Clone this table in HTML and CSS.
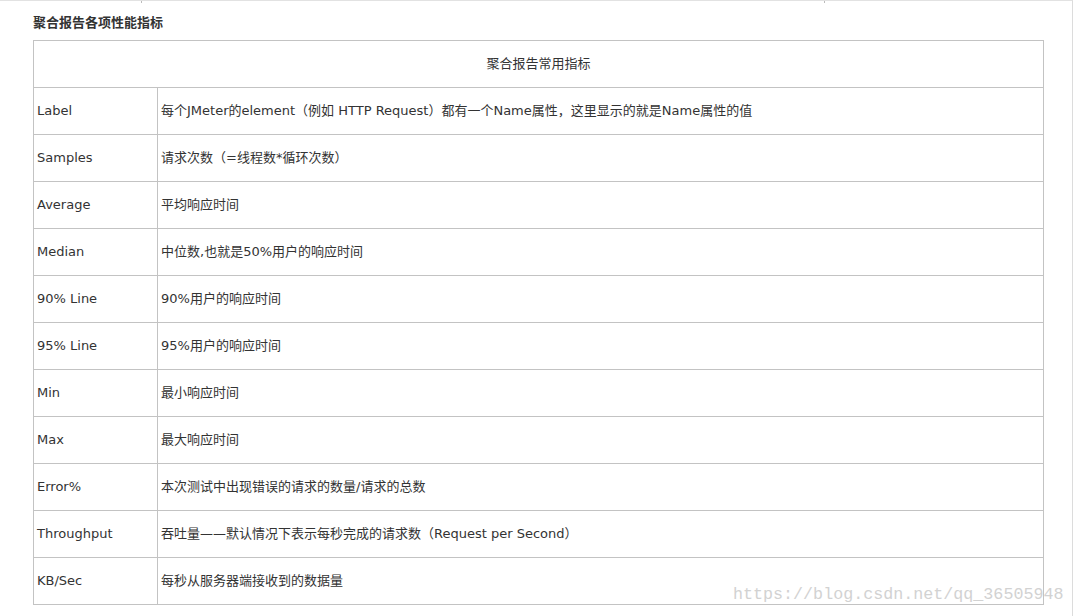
FILE: index.html
```html
<!DOCTYPE html>
<html lang="zh">
<head>
<meta charset="utf-8">
<title>聚合报告各项性能指标</title>
<link rel="stylesheet" href="styles.css">
</head>
<body>
<div class="page">
  <span class="tick tick-a"></span>
  <span class="tick tick-b"></span>
  <div class="content">
    <h3 class="title">聚合报告各项性能指标</h3>
    <table class="metrics">
      <colgroup><col class="c1"><col class="c2"></colgroup>
      <tr><td colspan="2" class="head">聚合报告常用指标</td></tr>
      <tr><td>Label</td><td>每个JMeter的element（例如 HTTP Request）都有一个Name属性，这里显示的就是Name属性的值</td></tr>
      <tr><td>Samples</td><td>请求次数（=线程数*循环次数）</td></tr>
      <tr><td>Average</td><td>平均响应时间</td></tr>
      <tr><td>Median</td><td>中位数,也就是50%用户的响应时间</td></tr>
      <tr><td>90% Line</td><td>90%用户的响应时间</td></tr>
      <tr><td>95% Line</td><td>95%用户的响应时间</td></tr>
      <tr><td>Min</td><td>最小响应时间</td></tr>
      <tr><td>Max</td><td>最大响应时间</td></tr>
      <tr><td>Error%</td><td>本次测试中出现错误的请求的数量/请求的总数</td></tr>
      <tr><td>Throughput</td><td>吞吐量——默认情况下表示每秒完成的请求数（Request per Second）</td></tr>
      <tr><td>KB/Sec</td><td>每秒从服务器端接收到的数据量</td></tr>
    </table>
  </div>
  <div class="watermark">https://blog.csdn.net/qq_36505948</div>
</div>
</body>
</html>
```
FILE: styles.css
```css
html, body {
  margin: 0;
  padding: 0;
  background: #fff;
}
.page {
  position: relative;
  width: 1073px;
  height: 616px;
  border-top: 1px solid #e2e2e2;
  border-right: 1px solid #dcdcdc;
  box-sizing: border-box;
  overflow: hidden;
  font-family: "DejaVu Sans", "Noto Sans CJK SC", sans-serif;
  color: #333;
}
.tick {
  position: absolute;
  top: 0;
  width: 1px;
  height: 2px;
  background: #bbb;
}
.tick-a { left: 141px; }
.tick-b { left: 824px; }
.content {
  padding: 12px 0 0 33px;
}
.title {
  margin: 0 0 9px 0;
  font-family: "Noto Sans CJK SC", sans-serif;
  font-size: 13px;
  font-weight: bold;
  line-height: 18px;
  color: #333;
}
.metrics {
  border-collapse: collapse;
  width: 1011px;
  table-layout: fixed;
  font-size: 13px;
}
.c1 { width: 124px; }
.metrics td {
  border: 1px solid #c3c3c3;
  height: 47px;
  padding: 0 3px;
  box-sizing: border-box;
  vertical-align: middle;
  line-height: 18px;
  white-space: nowrap;
}
.metrics td.head {
  text-align: center;
}
.watermark {
  position: absolute;
  left: 733px;
  top: 584px;
  font-family: "Liberation Mono", monospace;
  font-size: 16.7px;
  line-height: 20px;
  color: #d2d2d2;
  white-space: nowrap;
}
```
